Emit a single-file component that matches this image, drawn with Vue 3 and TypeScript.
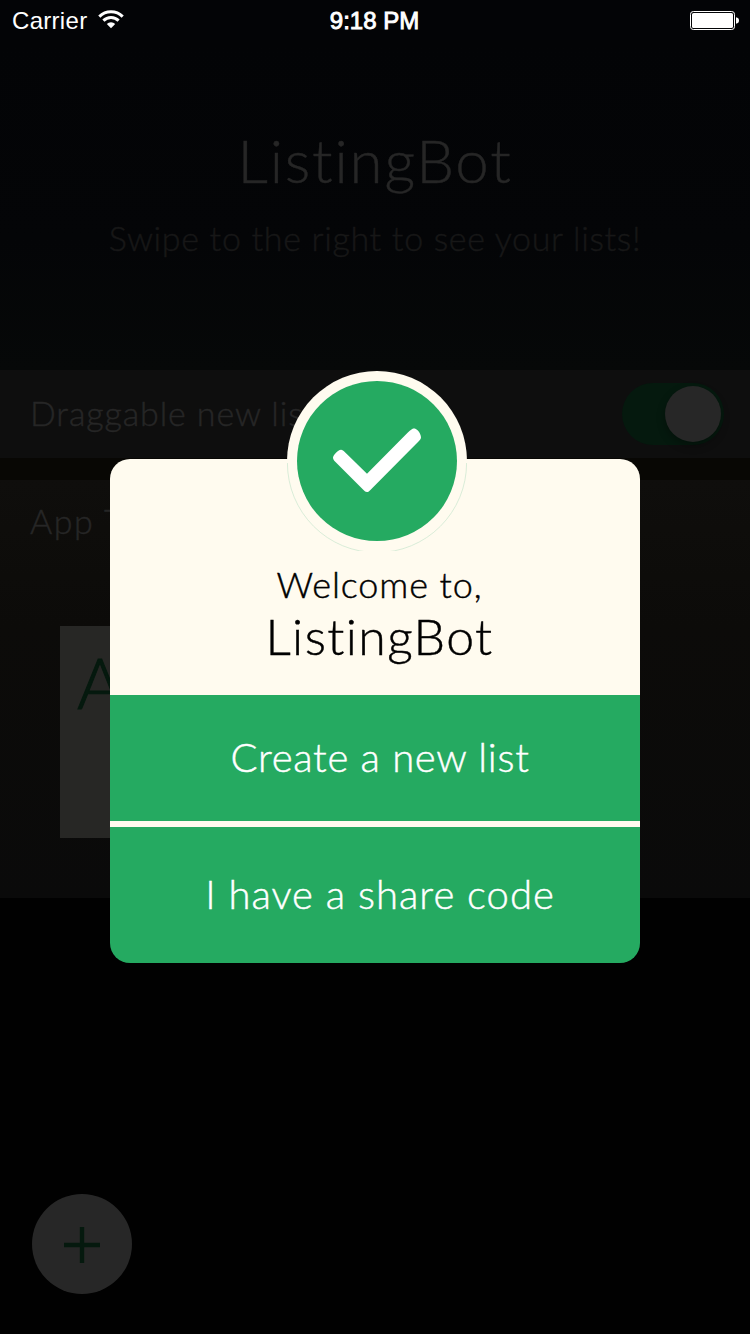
<script setup lang="ts">
interface Action {
  label: string
  kind: string
}

const actions: Action[] = [
  { label: 'Create a new list', kind: 'create' },
  { label: 'I have a share code', kind: 'share' },
]
</script>

<template>
  <div class="screen">
    <header class="status">
      <div class="carrier">
        <span>Carrier</span>
        <svg class="wifi" width="26" height="20" viewBox="0 0 26 20">
          <g fill="none" stroke="#fff" stroke-width="3">
            <path d="M1.3 7.6 A16.6 16.6 0 0 1 24.7 7.6" />
            <path d="M5.4 11.6 A10.7 10.7 0 0 1 20.6 11.6" />
          </g>
          <path d="M8.8 14.9 A6 6 0 0 1 17.2 14.9 L13 19.2 Z" fill="#fff" />
        </svg>
      </div>
      <div class="time">9:18 PM</div>
      <svg class="battery" width="49" height="20" viewBox="0 0 49 20">
        <rect x="0.5" y="0.5" width="44" height="18" rx="2.8" fill="none" stroke="#fff" />
        <rect x="2" y="2" width="41" height="15" rx="1.6" fill="#fff" />
        <path d="M46 6.2 Q49 6.8 49 9.5 Q49 12.2 46 12.8 Z" fill="#fff" />
      </svg>
    </header>

    <section class="intro">
      <h1>ListingBot</h1>
      <p>Swipe to the right to see your lists!</p>
    </section>

    <section class="row">
      <span class="label drag">Draggable new lists</span>
      <div class="switch"><div class="knob"></div></div>
    </section>

    <section class="themes">
      <div class="label theme">App Theme</div>
      <div class="tile">A</div>
    </section>

    <footer class="footer">
      <button class="add" aria-label="Add list">
        <svg width="36" height="36" viewBox="0 0 36 36">
          <path d="M18 0 V36 M0 18 H36" stroke="#05190e" stroke-width="4.4" />
        </svg>
      </button>
    </footer>

    <div class="dialog">
      <div class="welcome">
        <span class="small">Welcome to,</span>
        <span class="big">ListingBot</span>
      </div>
      <button v-for="a in actions" :key="a.kind" class="action" :class="a.kind">
        <span>{{ a.label }}</span>
      </button>
      <div class="badge">
        <svg width="180" height="180" viewBox="0 0 180 180">
          <circle cx="90" cy="90" r="90" fill="#fffbef" />
          <path d="M0.4 92 A89.6 89.6 0 0 0 179.6 92" fill="none" stroke="#cfe9d2" stroke-width="0.8" />
          <circle cx="90" cy="90" r="80" fill="#25aa61" />
          <path
            d="M46 86.5 C46 84.8 50.8 78.8 54 78.8 C55.5 78.8 56.5 79.8 57.5 80.8 L80 102.8 L120.6 61.8 C122 60.4 123.4 59 125.2 57.9 C127.2 57 129 57.8 130.3 59 C131.8 60.4 134 63.5 134 66.2 C134 67.8 132.8 69 131.5 70.4 L83.4 119 C82.2 120.2 81.4 121.1 79.9 121.1 C78.5 121.1 77.7 120.3 76.5 119.1 L48 90.5 C47 89.5 46 88.3 46 86.5 Z"
            fill="#fff"
          />
        </svg>
      </div>
    </div>
  </div>
</template>

<style>
body {
  margin: 0;
  background: #010101;
}
</style>

<style scoped>
.screen {
  position: relative;
  box-sizing: border-box;
  width: 750px;
  height: 1334px;
  overflow: hidden;
  display: flex;
  flex-direction: column;
  background: #010101;
  font-family: Lato, 'Liberation Sans', sans-serif;
  font-weight: 300;
  white-space: nowrap;
  -webkit-text-stroke-width: 0.45px;
}
button {
  border: 0;
  padding: 0;
  font: inherit;
}
.status {
  height: 42px;
  flex: none;
  box-sizing: border-box;
  padding: 0 11px 0 12px;
  display: grid;
  grid-template-columns: 1fr auto 1fr;
  align-items: center;
  background: #030406;
  color: #fff;
  font-family: 'Liberation Sans', Arial, sans-serif;
  font-size: 24px;
  font-weight: 400;
  line-height: 42px;
  -webkit-text-stroke-width: 0;
}
.carrier {
  display: flex;
  align-items: center;
  gap: 11px;
  letter-spacing: 0.3px;
}
.wifi {
  margin-top: -4px;
}
.time {
  margin-left: -2px;
  -webkit-text-stroke-width: 0.9px;
}
.battery {
  justify-self: end;
}
.intro {
  height: 328px;
  flex: none;
  display: flex;
  flex-direction: column;
  align-items: center;
  background: linear-gradient(180deg, #030406, #040507 60%, #060808);
}
.intro h1 {
  margin: 78px 0 0;
  font-size: 60px;
  line-height: 80px;
  font-weight: 300;
  color: #262626;
  letter-spacing: 1.8px;
}
.intro p {
  margin: 13px 0 0;
  font-size: 34px;
  line-height: 50px;
  color: #171717;
  letter-spacing: 0.68px;
}
.row {
  height: 88px;
  flex: none;
  box-sizing: border-box;
  padding: 0 26px 0 30px;
  display: flex;
  align-items: center;
  justify-content: space-between;
  background: #0e0e0e;
}
.label {
  font-size: 34px;
  line-height: 40px;
  color: #262626;
  letter-spacing: 0.9px;
}
.drag {
  margin-top: -2px;
}
.theme {
  letter-spacing: 1.5px;
}
.switch {
  width: 102px;
  height: 62px;
  box-sizing: border-box;
  padding: 3px;
  border-radius: 31px;
  background: #05190e;
  display: flex;
  justify-content: flex-end;
}
.knob {
  width: 56px;
  height: 56px;
  border-radius: 50%;
  background: #272727;
  box-shadow: 0 4px 8px rgba(0, 0, 0, 0.3);
}
.themes {
  height: 418px;
  flex: none;
  box-sizing: border-box;
  margin-top: 22px;
  padding: 21px 30px 0;
  background: linear-gradient(180deg, #0f0e0c, #0c0b09 35%, #0a0a0a);
  box-shadow: 0 -22px 0 #080704;
}
.tile {
  width: 212px;
  height: 212px;
  box-sizing: border-box;
  margin: 85px 0 0 30px;
  padding: 16px 17px;
  background: #272725;
  color: #05190e;
  font-size: 70px;
  line-height: 80px;
  -webkit-text-stroke-width: 1px;
}
.footer {
  flex: 1;
  display: flex;
  align-items: flex-end;
  padding: 0 32px 40px;
}
.add {
  width: 100px;
  height: 100px;
  padding-top: 1px;
  border-radius: 50%;
  background: #272727;
  display: flex;
  align-items: center;
  justify-content: center;
}
.dialog {
  position: absolute;
  left: 110px;
  top: 459px;
  width: 530px;
  height: 504px;
  display: flex;
  flex-direction: column;
}
.badge {
  position: absolute;
  left: 177px;
  top: -88px;
  width: 180px;
  height: 180px;
}
.welcome {
  height: 236px;
  flex: none;
  box-sizing: border-box;
  padding: 105px 0 0 9px;
  display: flex;
  flex-direction: column;
  align-items: center;
  border-radius: 20px 20px 0 0;
  background: #fffbef;
  color: #000;
}
.small {
  font-size: 36px;
  line-height: 40px;
  letter-spacing: 0.9px;
}
.big {
  margin-top: 2px;
  font-size: 50px;
  line-height: 60px;
  letter-spacing: 1.4px;
}
.action {
  background: #25aa61;
  color: #fff;
  font-size: 40px;
  padding: 0 0 3px 10px;
}
.create {
  box-sizing: border-box;
  height: 132px;
  flex: none;
  border-bottom: 6px solid #fffbef;
  letter-spacing: 0.7px;
}
.share {
  height: 136px;
  flex: none;
  border-radius: 0 0 20px 20px;
  letter-spacing: 1px;
}
</style>
